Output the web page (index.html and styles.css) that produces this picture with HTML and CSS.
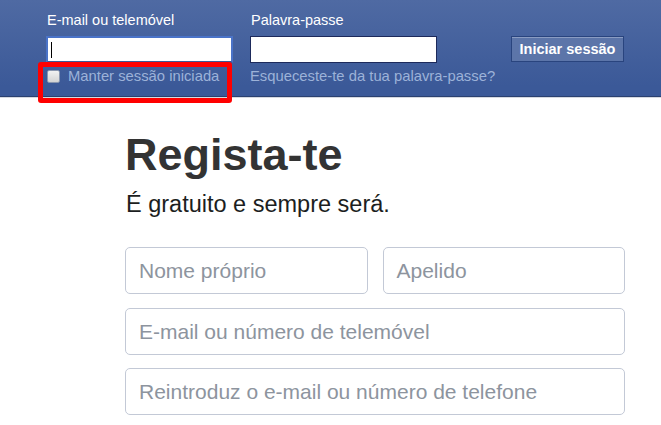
FILE: index.html
```html
<!DOCTYPE html>
<html lang="pt">
<head>
<meta charset="utf-8">
<link rel="stylesheet" href="styles.css">
</head>
<body>
<header class="topbar">
  <form class="login">
    <div class="field">
      <label class="lbl">E-mail ou telemóvel</label>
      <div class="inp focused"><span class="caret"></span></div>
      <div class="remember">
        <span class="chk"></span>
        <span class="sub">Manter sessão iniciada</span>
        <span class="highlight"></span>
      </div>
    </div>
    <div class="field">
      <label class="lbl">Palavra-passe</label>
      <div class="inp"></div>
      <div class="forgot"><span class="sub">Esqueceste-te da tua palavra-passe?</span></div>
    </div>
    <div class="btncol">
      <button type="button" class="btn">Iniciar sessão</button>
    </div>
  </form>
</header>
<main class="signup">
  <h1 class="title">Regista-te</h1>
  <p class="subtitle">É gratuito e sempre será.</p>
  <div class="row two">
    <div class="box">Nome próprio</div>
    <div class="box">Apelido</div>
  </div>
  <div class="row"><div class="box">E-mail ou número de telemóvel</div></div>
  <div class="row last"><div class="box">Reintroduz o e-mail ou número de telefone</div></div>
</main>
</body>
</html>
```
FILE: styles.css
```css
html, body { margin: 0; padding: 0; background: #fff; }
body { font-family: "Liberation Sans", Arial, sans-serif; overflow: hidden; }

.topbar {
  height: 97px;
  box-sizing: border-box;
  background: linear-gradient(#4f6aa3, #3b5998 90%);
  border-bottom: 1px solid #2b4170;
  box-shadow: 0 1px 0 #d6d9e0;
  position: relative;
}
.login {
  display: flex;
  padding: 12px 0 0 46px;
}
.field { width: 187px; margin-right: 17px; display: flex; flex-direction: column; }
.lbl { color: #fff; font-size: 14.5px; line-height: 17px; height: 17px; margin-bottom: 7px; padding-left: 1px; white-space: nowrap; }
.inp {
  height: 27px;
  box-sizing: border-box;
  background: #fff;
  border: 1px solid #1d2a5b;
  position: relative;
}
.inp.focused { border: 2px solid #4a73c8; border-bottom-color: #3b5998; }
.caret { position: absolute; left: 3px; top: 4px; width: 1px; height: 16px; background: #000; }
.remember, .forgot { display: flex; align-items: center; margin-top: 5px; height: 17px; position: relative; white-space: nowrap; }
.chk {
  width: 11px; height: 11px;
  border: 1px solid #8a97b0;
  border-radius: 2px;
  background: linear-gradient(#f2f2f2, #d4d4d4);
  margin: 0 8px 0 1px;
}
.sub { color: #9cb2d8; font-size: 14.8px; line-height: 17px; }
.highlight {
  position: absolute;
  left: -8px; top: -6px;
  width: 194px; height: 41px;
  box-sizing: border-box;
  border: 5px solid #ff0000;
  border-radius: 3px;
}
.btncol { padding-top: 24px; margin-left: 57px; }
.btn {
  height: 26px;
  width: 113px;
  box-sizing: border-box;
  border: 1px solid #29447e;
  background: #5c75a9;
  color: #fff;
  font-family: "Liberation Sans", Arial, sans-serif;
  font-weight: bold;
  font-size: 14.5px;
  padding: 0;
  box-shadow: inset 0 1px 0 #8a9cc2;
}

.signup { padding: 30px 0 0 125px; width: 500px; }
.title {
  margin: 0;
  font-size: 45px;
  line-height: 56px;
  font-weight: bold;
  color: #333;
}
.subtitle {
  margin: 7px 0 0 1px;
  font-size: 23.5px;
  line-height: 29px;
  color: #1c1e21;
}
.row { display: flex; gap: 15px; margin-top: 14px; }
.row.two { margin-top: 28px; }
.row.last { margin-top: 13px; }
.box {
  flex: 1;
  height: 47px;
  box-sizing: border-box;
  border: 1px solid #c3c9d6;
  border-radius: 5px;
  color: #8d949e;
  font-size: 21px;
  line-height: 45px;
  padding-left: 13px;
  white-space: nowrap;
}
```
